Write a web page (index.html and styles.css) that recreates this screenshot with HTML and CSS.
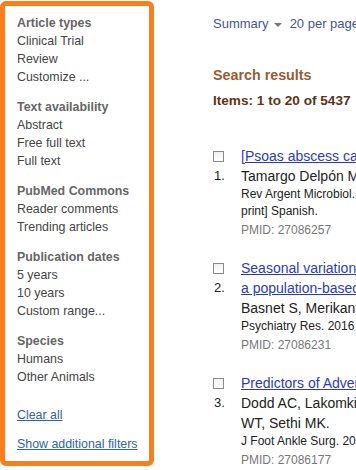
FILE: index.html
```html
<!DOCTYPE html>
<html lang="en">
<head>
  <meta charset="UTF-8" />
  <title>PubMed results</title>
  <link rel="stylesheet" href="styles.css">
</head>
<body>
  <!-- Filters sidebar -->
  <div class="sidebar">
    <div class="group">
      <div class="head">Article types</div>
      <div class="item">Clinical Trial</div>
      <div class="item">Review</div>
      <div class="item">Customize ...</div>
    </div>
    <div class="group">
      <div class="head">Text availability</div>
      <div class="item">Abstract</div>
      <div class="item">Free full text</div>
      <div class="item">Full text</div>
    </div>
    <div class="group">
      <div class="head">PubMed Commons</div>
      <div class="item">Reader comments</div>
      <div class="item">Trending articles</div>
    </div>
    <div class="group">
      <div class="head">Publication dates</div>
      <div class="item">5 years</div>
      <div class="item">10 years</div>
      <div class="item">Custom range...</div>
    </div>
    <div class="group">
      <div class="head">Species</div>
      <div class="item">Humans</div>
      <div class="item">Other Animals</div>
    </div>
    <a class="side-link clear" href="#">Clear all</a>
    <a class="side-link" href="#">Show additional filters</a>
  </div>

  <!-- Results -->
  <div class="main">
    <div class="display">
      <span>Summary</span><span class="caret"></span>
      <span class="per-page">20 per page</span>
    </div>
    <h2 class="results-title">Search results</h2>
    <div class="items-count">Items: 1 to 20 of 5437</div>

    <div class="result">
      <div class="side">
        <div class="cb-row"><span class="cb"></span></div>
        <div class="num">1.</div>
      </div>
      <div class="body">
        <a class="title" href="#">[Psoas abscess caused by Staphylococcus aureus]</a>
        <div class="authors">Tamargo Delpón M, Rodríguez Llorente S.</div>
        <div class="journal">Rev Argent Microbiol. 2016 Apr 13. [Epub ahead of<br>print] Spanish.</div>
        <div class="pmid">PMID: 27086257</div>
      </div>
    </div>

    <div class="result">
      <div class="side">
        <div class="cb-row"><span class="cb"></span></div>
        <div class="num">2.</div>
      </div>
      <div class="body">
        <a class="title" href="#">Seasonal variations of mood in a Nepali<br>a population-based study</a>
        <div class="authors">Basnet S, Merikanto I, Lahti T.</div>
        <div class="journal">Psychiatry Res. 2016 Apr 6;240:245-251.</div>
        <div class="pmid">PMID: 27086231</div>
      </div>
    </div>

    <div class="result">
      <div class="side">
        <div class="cb-row"><span class="cb"></span></div>
        <div class="num">3.</div>
      </div>
      <div class="body">
        <a class="title" href="#">Predictors of Adverse Events for Ankle Fractures</a>
        <div class="authors">Dodd AC, Lakomkin N, Attum B, Obremskey<br>WT, Sethi MK.</div>
        <div class="journal">J Foot Ankle Surg. 2016 Apr 13.</div>
        <div class="pmid">PMID: 27086177</div>
      </div>
    </div>
  </div>
</body>
</html>
```

FILE: styles.css
```css
* {
  box-sizing: border-box;
}

body {
  margin: 0;
  padding-top: 1px;
  font-family: "Liberation Sans", Arial, sans-serif;
  background: #fff;
  display: flex;
  align-items: flex-start;
  overflow: hidden;
  width: 356px;
  height: 470px;
}

/* Sidebar */
.sidebar {
  flex: none;
  width: 154px;
  height: 465px;
  border: 5px solid #fa7d1e;
  border-radius: 6px;
  padding: 8px 0 0 12px;
  font-size: 12.4px;
  line-height: 18px;
  display: flex;
  flex-direction: column;
  align-items: flex-start;
}
.group {
  margin-bottom: 12px;
}
.head {
  font-weight: bold;
  color: #666;
}
.item {
  color: #444;
}
.side-link {
  color: #2f64a0;
  text-decoration: underline;
  margin-bottom: 11px;
}
.side-link.clear {
  margin-top: 8px;
}

/* Main */
.main {
  flex: none;
  margin-left: 59px;
  margin-top: 14px;
  white-space: nowrap;
  color: #222;
}
.display {
  font-size: 13px;
  line-height: 18px;
  color: #43578f;
  display: flex;
  align-items: center;
}
.caret {
  width: 0;
  height: 0;
  margin: 1px 0 0 5px;
  border-left: 4px solid transparent;
  border-right: 4px solid transparent;
  border-top: 4px solid #777;
}
.per-page {
  margin-left: 8px;
}
.results-title {
  margin: 32px 0 7px;
  font-size: 14.3px;
  line-height: 20px;
  color: #9a5a34;
}
.items-count {
  font-size: 13.6px;
  line-height: 18px;
  font-weight: bold;
  color: #5e3418;
  margin-bottom: 36px;
}

/* Result rows */
.result {
  display: flex;
  margin-bottom: 19px;
}
.side {
  width: 28px;
  flex: none;
}
.cb-row {
  height: 20px;
  display: flex;
  align-items: center;
}
.cb {
  width: 11px;
  height: 11px;
  border: 1px solid #8a8a8a;
  background: linear-gradient(#f2f2f2, #fff);
}
.num {
  font-size: 13px;
  line-height: 20px;
  padding-left: 1px;
}
.body {
  display: flex;
  flex-direction: column;
  align-items: flex-start;
}
.title {
  font-size: 14px;
  line-height: 20px;
  color: #2b3cb8;
  text-decoration: underline;
}
.authors {
  font-size: 14px;
  line-height: 20px;
  color: #222;
}
.journal {
  font-size: 12px;
  line-height: 17px;
  color: #222;
}
.pmid {
  font-size: 12px;
  line-height: 17px;
  margin-top: 2px;
  color: #777;
}
```
